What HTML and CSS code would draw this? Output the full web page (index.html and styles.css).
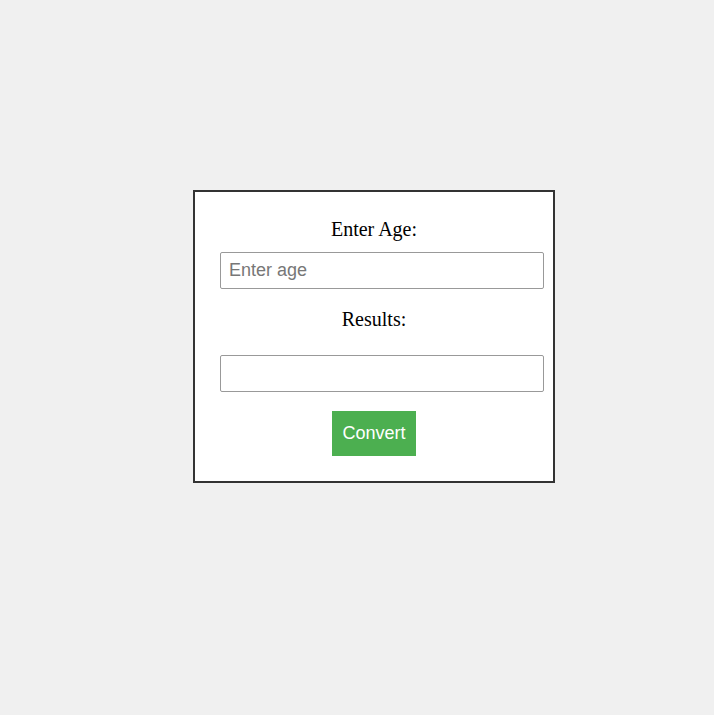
FILE: index.html
```html
<!DOCTYPE html>
<html>
<head>
<meta charset="utf-8">
<link rel="stylesheet" href="styles.css">
</head>
<body>
<div class="page">
  <div class="box">
    <label class="label" for="age">Enter Age:</label>
    <input id="age" class="field first" type="text" placeholder="Enter age">
    <div class="label results">Results:</div>
    <input class="field second" type="text">
    <button class="btn">Convert</button>
  </div>
</div>
</body>
</html>
```
FILE: styles.css
```css
html, body {
  margin: 0;
  padding: 0;
  background: #f0f0f0;
}
.page {
  padding-top: 190px;
  padding-left: 193px;
}
.box {
  width: 308px;
  padding: 26px 25px 25px 25px;
  background: #fff;
  border: 2px solid #333;
  display: flex;
  flex-direction: column;
  align-items: flex-start;
  font-family: "Liberation Serif", serif;
}
.label {
  display: block;
  width: 100%;
  text-align: center;
  font-size: 20px;
  line-height: 23px;
  color: #000;
}
.field {
  box-sizing: border-box;
  width: 324px;
  flex-shrink: 0;
  height: 37px;
  padding: 7px 8px;
  border: 1px solid #999;
  border-radius: 2px;
  font-family: "Liberation Sans", Arial, sans-serif;
  font-size: 18px;
  color: #000;
  background: #fff;
  outline: none;
}
.field::placeholder {
  color: #777;
}
.first {
  margin-top: 11px;
}
.results {
  margin-top: 19px;
}
.second {
  margin-top: 24px;
}
.btn {
  margin-top: 19px;
  align-self: center;
  width: 84px;
  height: 45px;
  border: none;
  background: #4caf50;
  color: #fff;
  font-family: "Liberation Sans", Arial, sans-serif;
  font-size: 18px;
  padding: 0;
}
```
